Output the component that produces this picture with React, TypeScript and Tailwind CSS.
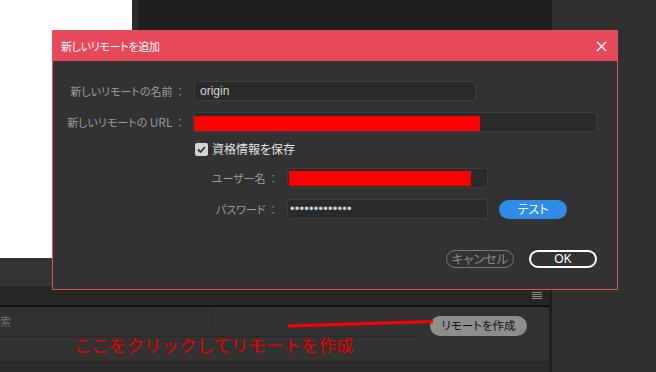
import React from "react";

const jp = "font-['Noto_Sans_CJK_JP','Noto_Sans',sans-serif]";
const palt = "[font-feature-settings:'palt']";

function Colon() {
  return <span className="text-[#7f92a6] ml-[5px]">：</span>;
}

function FieldBox({
  className,
  children,
}: {
  className: string;
  children?: React.ReactNode;
}) {
  return (
    <div
      className={`h-[20px] bg-[#2a2a2a] border border-[#3d3d3d] rounded-[3px] ${className}`}
    >
      {children}
    </div>
  );
}

function Hamburger() {
  return (
    <div className="flex flex-col gap-[1px]">
      <div className="w-[10px] h-[1px] bg-[#8a8a8a]" />
      <div className="w-[10px] h-[1px] bg-[#8a8a8a]" />
      <div className="w-[10px] h-[1px] bg-[#8a8a8a]" />
      <div className="w-[10px] h-[1px] bg-[#8a8a8a]" />
    </div>
  );
}

function AddRemoteDialog() {
  return (
    <div className="absolute left-[52px] top-[30px] w-[566px] h-[260px] border border-[#d9565f] bg-[#323232] flex flex-col">
      <div className="h-[30px] bg-[#e64a5a] flex items-center justify-between pl-[8px] pr-[10px]">
        <span className={`text-[11px] tracking-[-0.3px] text-white ${palt}`}>新しいリモートを追加</span>
        <svg width="11" height="11" viewBox="0 0 11 11">
          <path d="M1 1 L10 10 M10 1 L1 10" stroke="#fff" strokeWidth="1.4" />
        </svg>
      </div>

      <div className={`flex flex-col pt-[20px] text-[11px] text-[#9c9c9c] ${palt}`}>
        <div className="flex items-center h-[20px]">
          <div className="w-[130px] text-right">
            新しいリモートの名前<Colon />
          </div>
          <FieldBox className="ml-[11px] w-[282px] flex items-center pl-[5px] text-[#d8d8d8] font-['Liberation_Sans',sans-serif] text-[12px]">
            origin
          </FieldBox>
        </div>

        <div className="flex items-center h-[20px] mt-[11px]">
          <div className="w-[130px] text-right">
            新しいリモートの <span className="text-[#8e9aa6] text-[12px]">URL</span>
            <Colon />
          </div>
          <FieldBox className="ml-[10px] w-[404px] flex items-end">
            <div className="w-[286px] h-[15px] bg-[#ff0000]" />
          </FieldBox>
        </div>

        <div className="flex items-center h-[14px] mt-[10px]">
          <div className="ml-[142px] w-[13px] h-[13px] rounded-[2px] bg-[#d4d4d4] flex items-center justify-center">
            <svg width="11" height="11" viewBox="0 0 11 11">
              <path d="M2 5.5 L4.5 8 L9 3" stroke="#333" strokeWidth="1.8" fill="none" />
            </svg>
          </div>
          <span className="ml-[4px] text-[#e2e2e2] text-[12px]">資格情報を保存</span>
        </div>

        <div className="flex items-center h-[20px] mt-[12px]">
          <div className="w-[223px] text-right">
            ユーザー名<Colon />
          </div>
          <FieldBox className="ml-[11px] w-[201px] flex items-center pl-[1px]">
            <div className="w-[182px] h-[15px] bg-[#ff0000]" />
          </FieldBox>
        </div>

        <div className="flex items-center h-[20px] mt-[11px]">
          <div className="w-[223px] text-right">
            パスワード<Colon />
          </div>
          <FieldBox className="ml-[11px] w-[201px] flex items-center pl-[2px] text-[#c9d2db] font-['Liberation_Sans',sans-serif] text-[13px] tracking-[0.2px]">
            •••••••••••••
          </FieldBox>
          <button className="ml-[11px] w-[68px] h-[19px] rounded-full bg-[#2e8be8] text-white text-[12px] flex items-center justify-center">
            テスト
          </button>
        </div>

        <div className="flex justify-end gap-[15px] pr-[20px] mt-[31px]">
          <button className="w-[68px] h-[18px] rounded-full border-[1.5px] border-[#7a7a7a] text-[#8c8c8c] text-[12.5px] flex items-center justify-center">
            キャンセル
          </button>
          <button className="w-[68px] h-[18px] rounded-full border-2 border-white text-white text-[12px] font-['Liberation_Sans',sans-serif] flex items-center justify-center">
            OK
          </button>
        </div>
      </div>
    </div>
  );
}

export default function App() {
  return (
    <div className={`relative w-[656px] h-[372px] overflow-hidden flex bg-[#2f2f2f] ${jp}`}>
      <div className="w-[549px] flex flex-col">
        <div className="h-[258px] flex">
          <div className="w-[132px] bg-white" />
          <div className="flex-1 bg-[#202020] border-l-[6px] border-[#2d2d2d]" />
        </div>
        <div className="h-[27px] bg-[#333333]" />
        <div className="h-[20px] bg-[#262626] border-t border-[#383838] flex items-center justify-end pr-[7px]">
          <Hamburger />
        </div>
        <div className="h-[2px] bg-[#111111]" />
        <div className="h-[55px] bg-[#323232] flex border-b border-[#262626]">
          <div className="w-[420px] flex flex-col">
            <div className="h-[30px] border-b border-[#292929] flex items-center">
              <div className="-ml-[16px] w-[229px] h-[23px] bg-[#313131] border border-[#2b2b2b] rounded-[2px] flex items-center pl-[4px] text-[11px] text-[#707070]">
                検索
              </div>
            </div>
          </div>
          <div className="flex-1 pt-[9px]">
            <button className={`ml-[10px] w-[97px] h-[20px] rounded-full bg-[#8e8e8e] text-[#111] text-[11.5px] flex items-center justify-center ${palt}`}>
              リモートを作成
            </button>
          </div>
        </div>
        <div className="flex-1 bg-[#2b2b2b]" />
      </div>
      <div className="flex-1 border-l-[3px] border-[#1e1e1e] bg-[#2f2f2f]" />

      <AddRemoteDialog />

      <svg className="absolute left-0 top-0" width="656" height="372">
        <line x1="288" y1="326" x2="433" y2="321.5" stroke="#ff0000" strokeWidth="3" />
      </svg>
      <div className="absolute left-[74px] top-[333px] text-[17.5px] leading-[24px] text-[#e80000] whitespace-nowrap">
        ここをクリックしてリモートを作成
      </div>
    </div>
  );
}
